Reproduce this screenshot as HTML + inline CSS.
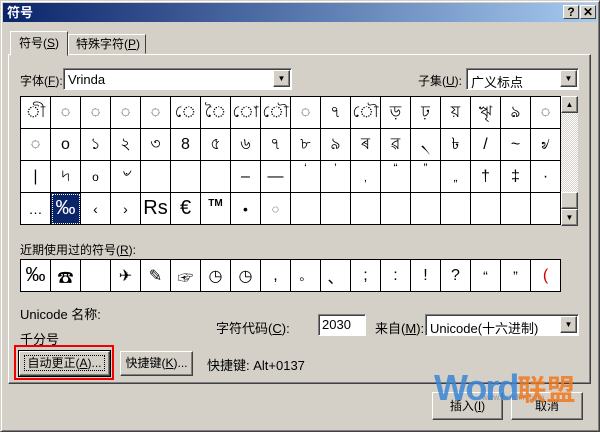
<!DOCTYPE html>
<html><head><meta charset="utf-8"><style>
*{box-sizing:border-box;margin:0;padding:0}
body{width:600px;height:432px;background:#d4d0c8;font-family:"Liberation Sans","Noto Sans CJK SC",sans-serif;font-size:12px;color:#000;position:relative;overflow:hidden}
.a{position:absolute}
.win{left:0;top:0;width:600px;height:432px;border:1px solid;border-color:#d4d0c8 #404040 #404040 #d4d0c8;box-shadow:inset 1px 1px #fff,inset -1px -1px #808080}
.title{left:3px;top:3px;width:594px;height:19px;background:linear-gradient(90deg,#0a246a,#a6caf0);color:#fff;font-weight:bold;font-size:13px;line-height:19px;padding-left:4px}
.tb{width:16px;height:14px;top:5px;background:#d4d0c8;border:1px solid;border-color:#fff #404040 #404040 #fff;font-weight:bold;font-size:12px;line-height:12px;text-align:center;color:#000}
.raised{border:1px solid;border-color:#fff #404040 #404040 #fff;box-shadow:inset -1px -1px #808080}
.sunk{background:#fff;border:1px solid;border-color:#808080 #fff #fff #808080;box-shadow:inset 1px 1px #404040}
.drop{width:17px;height:17px;background:#d4d0c8;border:1px solid;border-color:#fff #404040 #404040 #fff;box-shadow:inset -1px -1px #808080;font-size:8px;text-align:center;line-height:15px}
table{border-collapse:collapse;position:absolute;table-layout:fixed;width:541px}
td{border:1px solid #000;width:30px;height:32px;text-align:center;background:#fff;font-size:16px;padding:0;overflow:hidden;white-space:nowrap}
.btn{background:#d4d0c8;border:1px solid;border-color:#fff #404040 #404040 #fff;box-shadow:inset -1px -1px #808080;text-align:center;font-size:12px}
u{text-decoration:underline}
</style></head><body>
<div class="a win"></div>
<div class="a title">符号</div>
<div class="a tb" style="left:563px">?</div>
<div class="a tb" style="left:580px">✕</div>

<div class="a raised" style="left:8px;top:54px;width:583px;height:330px;border-top-color:#fff"></div>
<div class="a" style="left:10px;top:31px;width:58px;height:25px;background:#d4d0c8;border:1px solid;border-color:#fff #404040 #d4d0c8 #fff;line-height:22px;padding-left:8px">符号(<u>S</u>)</div>
<div class="a" style="left:68px;top:34px;width:78px;height:20px;background:#d4d0c8;border:1px solid;border-color:#fff #404040 transparent #fff;line-height:18px;padding-left:7px">特殊字符(<u>P</u>)</div>

<div class="a" style="left:20px;top:72px">字体(<u>F</u>):</div>
<div class="a sunk" style="left:63px;top:68px;width:229px;height:22px;padding:3px 4px;font-size:13px">Vrinda</div>
<div class="a drop" style="left:273px;top:70px">▼</div>
<div class="a" style="left:418px;top:72px">子集(<u>U</u>):</div>
<div class="a sunk" style="left:466px;top:68px;width:113px;height:22px;padding:3px 4px;font-size:13px">广义标点</div>
<div class="a drop" style="left:560px;top:70px">▼</div>

<table style="left:20px;top:96px">
<tr><td>ী</td><td>◌</td><td>◌</td><td>◌</td><td>◌</td><td>ে</td><td>ৈ</td><td>ো</td><td>ৌ</td><td>◌</td><td>৭</td><td>ৌ</td><td>ড়</td><td>ঢ়</td><td>য়</td><td>ৠ</td><td>ঌ</td><td>◌</td></tr>
<tr><td>◌</td><td>o</td><td>১</td><td>২</td><td>৩</td><td>8</td><td>৫</td><td>৬</td><td>৭</td><td>৮</td><td>৯</td><td>ৰ</td><td>ৱ</td><td>৲</td><td>৳</td><td>/</td><td>~</td><td>৶</td></tr>
<tr><td>|</td><td>৸</td><td style="font-size:12px">o</td><td>৺</td><td></td><td></td><td></td><td>–</td><td>—</td><td style="font-size:12px;vertical-align:top">‘</td><td style="font-size:12px;vertical-align:top">’</td><td style="font-size:12px">‚</td><td style="font-size:12px;vertical-align:top">“</td><td style="font-size:12px;vertical-align:top">”</td><td style="font-size:12px">„</td><td>†</td><td>‡</td><td>·</td></tr>
<tr><td style="font-size:14px">…</td><td style="background:#0a246a;color:#fff;outline:1px dotted #fff;outline-offset:-2px;font-size:20px">‰</td><td style="font-size:14px">‹</td><td style="font-size:14px">›</td><td style="font-size:20px">Rs</td><td style="font-size:20px">€</td><td style="font-size:10px;font-weight:bold;vertical-align:top;padding-top:5px">TM</td><td style="font-size:14px">•</td><td style="font-size:12px">◌</td><td></td><td></td><td></td><td></td><td></td><td></td><td></td><td></td><td></td></tr>
</table>
<div class="a" style="left:561px;top:96px;width:17px;height:130px;background:repeating-conic-gradient(#fff 0 25%,#d4d0c8 0 50%) 0 0/2px 2px"></div>
<div class="a drop" style="left:561px;top:96px">▲</div>
<div class="a drop" style="left:561px;top:192px;height:17px;font-size:0"></div>
<div class="a drop" style="left:561px;top:209px">▼</div>

<div class="a" style="left:20px;top:241px">近期使用过的符号(<u>R</u>):</div>
<table style="left:20px;top:259px">
<tr><td style="font-size:20px">‰</td><td>☎</td><td></td><td>✈</td><td>✎</td><td>☞</td><td>◷</td><td>◷</td><td>,</td><td style="font-size:12px">。</td><td>、</td><td>;</td><td>:</td><td>!</td><td>?</td><td style="font-size:14px">“</td><td style="font-size:14px">”</td><td style="color:#c00">(</td></tr>
</table>

<div class="a" style="left:20px;top:304px;font-size:13px">Unicode 名称:</div>
<div class="a" style="left:20px;top:329px;font-size:13px">千分号</div>
<div class="a" style="left:216px;top:318px;font-size:13px">字符代码(<u>C</u>):</div>
<div class="a sunk" style="left:318px;top:314px;width:48px;height:22px;padding:2px 3px;font-size:13px">2030</div>
<div class="a" style="left:375px;top:318px;font-size:13px">来自(<u>M</u>):</div>
<div class="a sunk" style="left:425px;top:314px;width:154px;height:22px;padding:3px 4px;font-size:13px">Unicode(十六进制)</div>
<div class="a drop" style="left:560px;top:316px">▼</div>

<div class="a" style="left:14px;top:345px;width:100px;height:35px;border:2px solid #e00"></div>
<div class="a btn" style="left:19px;top:351px;width:91px;height:25px;line-height:22px;outline:1px solid #000"><span style="outline:1px dotted #000;padding:0 2px">自动更正(<u>A</u>)...</span></div>
<div class="a btn" style="left:120px;top:351px;width:73px;height:25px;line-height:22px">快捷键(<u>K</u>)...</div>
<div class="a" style="left:207px;top:355px;font-size:13px">快捷键: Alt+0137</div>

<div class="a btn" style="left:432px;top:392px;width:71px;height:28px;line-height:26px">插入(<u>I</u>)</div>
<div class="a btn" style="left:511px;top:392px;width:72px;height:28px;line-height:26px">取消</div>

<div class="a" style="left:482px;top:393px;font-size:8px;color:#999">www.wordlm.com</div>
<div class="a" style="left:434px;top:368px;font-size:36px;line-height:40px;font-weight:bold;color:#3a86d6;letter-spacing:-2px;opacity:.85">Word<span style="color:#f07820;font-size:29px;letter-spacing:0">联盟</span></div>
</body></html>
